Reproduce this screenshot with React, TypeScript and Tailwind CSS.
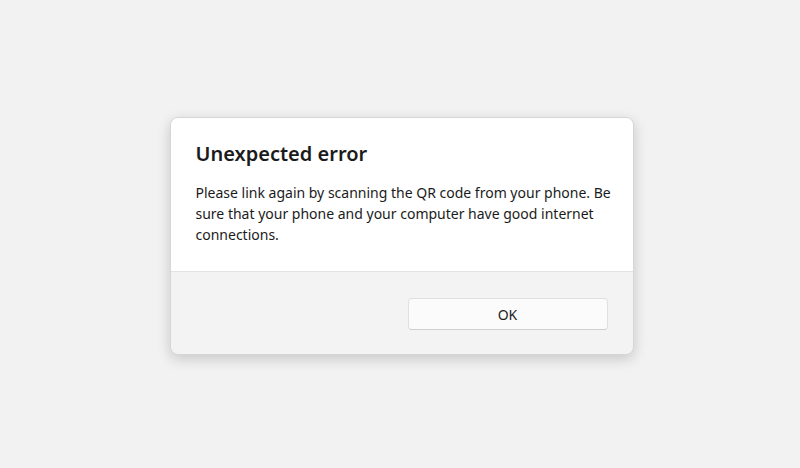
export default function App() {
  return (
    <div className="w-[800px] h-[468px] bg-[#f2f2f2] flex items-start justify-center pl-[3px]" style={{ fontFamily: '"Segoe UI", "Noto Sans", "Open Sans", sans-serif' }}>
      <div className="mt-[117px] w-[464px] rounded-[8px] border border-[#d6d6d6] bg-[#f3f3f3] shadow-[0_4px_14px_rgba(0,0,0,0.18)] overflow-hidden">
        <div className="bg-white pl-[25px] pr-[14px] pt-[22px] pb-[26px] border-b border-[#e3e3e3]">
          <h1 className="text-[20px] leading-[28px] font-semibold text-[#1b1b1b]">Unexpected error</h1>
          <p className="mt-[14px] text-[14px] leading-[21px] text-[#1b1b1b]">
            Please link again by scanning the QR code from your phone. Be sure that your phone and your computer have good internet connections.
          </p>
        </div>
        <div className="flex justify-end px-[25px] pt-[26px] pb-[24px]">
          <button className="w-[200px] h-[32px] rounded-[4px] bg-[#fbfbfb] border border-[#e0e0e0] border-b-[#cfcfcf] text-[14px] text-[#1b1b1b]">
            OK
          </button>
        </div>
      </div>
    </div>
  );
}
